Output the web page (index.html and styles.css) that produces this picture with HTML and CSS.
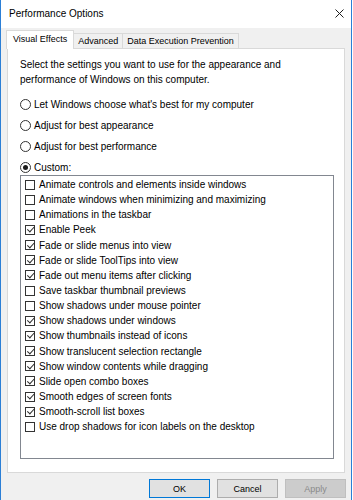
FILE: index.html
```html
<html>

<head>
    <link rel="stylesheet" href="styles.css">
</head>

<body>
    <div class="window">
        <div class="titleBar">
            <span class="title">Performance Options</span>
            <svg class="close" width="9" height="9" viewBox="0 0 9 9">
                <path d="M0.5 0.5 L8.5 8.5 M8.5 0.5 L0.5 8.5" stroke="#1e1e1e" stroke-width="1" fill="none" />
            </svg>
        </div>
        <div class="client">
            <div class="tabs">
                <div class="tab active">Visual Effects</div>
                <div class="tab">Advanced</div>
                <div class="tab">Data Execution Prevention</div>
            </div>
            <div class="panel">
                <p class="intro">Select the settings you want to use for the appearance and<br>performance of Windows on this computer.</p>
                <div class="options">
                    <div class="radioRow"><span class="radio"></span>Let Windows choose what's best for my computer</div>
                    <div class="radioRow"><span class="radio"></span>Adjust for best appearance</div>
                    <div class="radioRow"><span class="radio"></span>Adjust for best performance</div>
                    <div class="radioRow"><span class="radio on"></span>Custom:</div>
                </div>
                <div class="list">
                    <div class="item"><span class="box"></span>Animate controls and elements inside windows</div>
                    <div class="item"><span class="box"></span>Animate windows when minimizing and maximizing</div>
                    <div class="item"><span class="box"></span>Animations in the taskbar</div>
                    <div class="item"><span class="box checked"></span>Enable Peek</div>
                    <div class="item"><span class="box checked"></span>Fade or slide menus into view</div>
                    <div class="item"><span class="box checked"></span>Fade or slide ToolTips into view</div>
                    <div class="item"><span class="box checked"></span>Fade out menu items after clicking</div>
                    <div class="item"><span class="box"></span>Save taskbar thumbnail previews</div>
                    <div class="item"><span class="box"></span>Show shadows under mouse pointer</div>
                    <div class="item"><span class="box checked"></span>Show shadows under windows</div>
                    <div class="item"><span class="box checked"></span>Show thumbnails instead of icons</div>
                    <div class="item"><span class="box checked"></span>Show translucent selection rectangle</div>
                    <div class="item"><span class="box checked"></span>Show window contents while dragging</div>
                    <div class="item"><span class="box checked"></span>Slide open combo boxes</div>
                    <div class="item"><span class="box checked"></span>Smooth edges of screen fonts</div>
                    <div class="item"><span class="box checked"></span>Smooth-scroll list boxes</div>
                    <div class="item"><span class="box"></span>Use drop shadows for icon labels on the desktop</div>
                </div>
            </div>
            <div class="buttons">
                <button class="default">OK</button>
                <button>Cancel</button>
                <button disabled>Apply</button>
            </div>
        </div>
    </div>
</body>

</html>
```

FILE: styles.css
```css
body {
    margin: 0;
    width: 353px;
    height: 500px;
    background: #ffffff;
    font-family: "Liberation Sans", Arial, sans-serif;
    font-size: 10px;
    color: #000000;
    overflow: hidden;
}

.window {
    width: 350px;
    height: 500px;
    border-left: 1px solid #2b7fd6;
    border-right: 1px solid #2b7fd6;
    background: #f0f0f0;
}

.titleBar {
    height: 28px;
    background: #ffffff;
    display: flex;
    align-items: center;
    justify-content: space-between;
    padding: 0 7px 2px 8px;
    box-sizing: border-box;
}

.close {
    margin-top: 1px;
}

.client {
    padding: 2px 6px 0 6px;
}

/* tab strip */
.tabs {
    display: flex;
    align-items: flex-end;
    height: 18px;
    margin-left: -1px;
}

.tab {
    height: 14px;
    line-height: 14px;
    padding: 0 4px;
    border: 1px solid #d9d9d9;
    border-bottom: none;
    border-left: none;
    background: #f0f0f0;
    font-size: 9px;
}

.tab.active {
    height: 18px;
    line-height: 17px;
    border-left: 1px solid #d9d9d9;
    background: #ffffff;
    margin-bottom: -1px;
    position: relative;
    padding: 0 6px;
}

.panel {
    width: 314px;
    height: 410px;
    background: #ffffff;
    border: 1px solid #d9d9d9;
    padding: 0 10px 13px 12px;
}

.intro {
    margin: 8px 0 0 0;
    line-height: 15px;
}

.options {
    margin-top: 9px;
    display: flex;
    flex-direction: column;
    gap: 5px;
}

.radioRow {
    height: 16px;
    display: flex;
    align-items: center;
}

.radio {
    width: 9px;
    height: 9px;
    border: 1px solid #333333;
    border-radius: 50%;
    margin-right: 3px;
    display: flex;
    align-items: center;
    justify-content: center;
}

.radio.on::after {
    content: "";
    width: 5px;
    height: 5px;
    border-radius: 50%;
    background: #1a1a1a;
}

/* checkbox list */
.list {
    box-sizing: border-box;
    height: 284px;
    border: 1px solid #828790;
    padding: 1px 0 0 4px;
}

.item {
    height: 15.15px;
    display: flex;
    align-items: center;
}

.box {
    width: 8px;
    height: 8px;
    border: 1px solid #333333;
    margin-right: 4px;
    position: relative;
}

.box.checked::after {
    content: "";
    position: absolute;
    left: 2.5px;
    top: -0.5px;
    width: 2.5px;
    height: 5.5px;
    border-right: 1px solid #2a2a2a;
    border-bottom: 1px solid #2a2a2a;
    transform: rotate(42deg);
}

.buttons {
    display: flex;
    justify-content: flex-end;
    gap: 7px;
    padding-top: 6px;
    margin-right: -1px;
}

button {
    width: 61px;
    height: 19px;
    background: #e1e1e1;
    border: 1px solid #adadad;
    font-family: "Liberation Sans", Arial, sans-serif;
    font-size: 9px;
    color: #000000;
    padding: 0;
}

button.default {
    border: 1px solid #0078d7;
}

button:disabled {
    background: #cccccc;
    border-color: #bfbfbf;
    color: #8a8a8a;
}
```
